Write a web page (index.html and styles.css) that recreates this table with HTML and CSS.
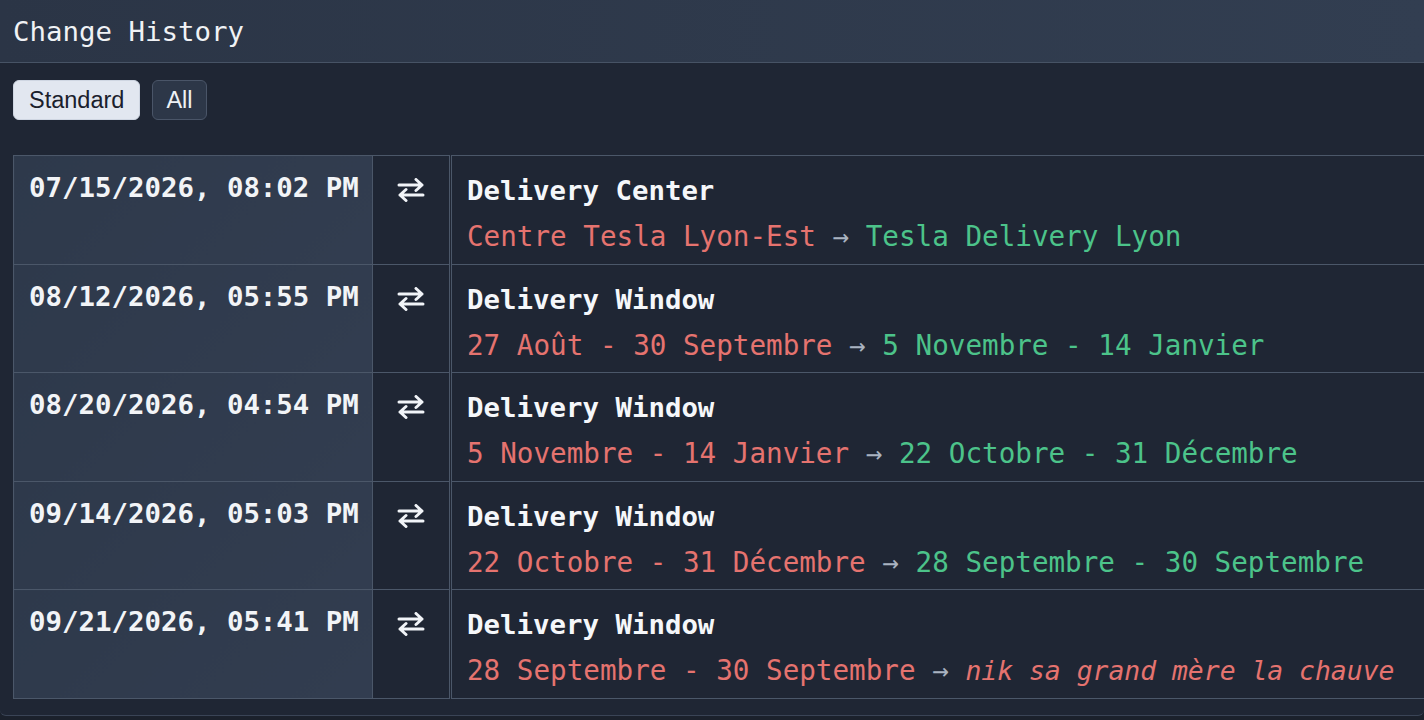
FILE: index.html
```html
<!DOCTYPE html>
<html>
<head>
<meta charset="utf-8">
<link rel="stylesheet" href="styles.css">
</head>
<body>
<div class="panel">
  <div class="header">Change History</div>
  <div class="body">
    <div class="tabs">
      <button class="tab active">Standard</button>
      <button class="tab">All</button>
    </div>
    <table class="history">
      <tr>
        <td class="date">07/15/2026, 08:02 PM</td>
        <td class="icon"><svg viewBox="0 0 28 24" width="28" height="24"><path d="M2 7H25M19 1.5L25 7L19 12.5M26 17H3M9 11.5L3 17L9 22.5" fill="none" stroke="#f1f4f8" stroke-width="3" stroke-linecap="round" stroke-linejoin="round"/></svg></td>
        <td class="change"><div class="field">Delivery Center</div><div class="diff"><span class="old">Centre Tesla Lyon-Est</span> <span class="arrow">→</span> <span class="new">Tesla Delivery Lyon</span></div></td>
      </tr>
      <tr>
        <td class="date">08/12/2026, 05:55 PM</td>
        <td class="icon"><svg viewBox="0 0 28 24" width="28" height="24"><path d="M2 7H25M19 1.5L25 7L19 12.5M26 17H3M9 11.5L3 17L9 22.5" fill="none" stroke="#f1f4f8" stroke-width="3" stroke-linecap="round" stroke-linejoin="round"/></svg></td>
        <td class="change"><div class="field">Delivery Window</div><div class="diff"><span class="old">27 Août - 30 Septembre</span> <span class="arrow">→</span> <span class="new">5 Novembre - 14 Janvier</span></div></td>
      </tr>
      <tr>
        <td class="date">08/20/2026, 04:54 PM</td>
        <td class="icon"><svg viewBox="0 0 28 24" width="28" height="24"><path d="M2 7H25M19 1.5L25 7L19 12.5M26 17H3M9 11.5L3 17L9 22.5" fill="none" stroke="#f1f4f8" stroke-width="3" stroke-linecap="round" stroke-linejoin="round"/></svg></td>
        <td class="change"><div class="field">Delivery Window</div><div class="diff"><span class="old">5 Novembre - 14 Janvier</span> <span class="arrow">→</span> <span class="new">22 Octobre - 31 Décembre</span></div></td>
      </tr>
      <tr>
        <td class="date">09/14/2026, 05:03 PM</td>
        <td class="icon"><svg viewBox="0 0 28 24" width="28" height="24"><path d="M2 7H25M19 1.5L25 7L19 12.5M26 17H3M9 11.5L3 17L9 22.5" fill="none" stroke="#f1f4f8" stroke-width="3" stroke-linecap="round" stroke-linejoin="round"/></svg></td>
        <td class="change"><div class="field">Delivery Window</div><div class="diff"><span class="old">22 Octobre - 31 Décembre</span> <span class="arrow">→</span> <span class="new">28 Septembre - 30 Septembre</span></div></td>
      </tr>
      <tr>
        <td class="date">09/21/2026, 05:41 PM</td>
        <td class="icon"><svg viewBox="0 0 28 24" width="28" height="24"><path d="M2 7H25M19 1.5L25 7L19 12.5M26 17H3M9 11.5L3 17L9 22.5" fill="none" stroke="#f1f4f8" stroke-width="3" stroke-linecap="round" stroke-linejoin="round"/></svg></td>
        <td class="change"><div class="field">Delivery Window</div><div class="diff"><span class="old">28 Septembre - 30 Septembre</span> <span class="arrow">→</span> <span class="old custom">nik sa grand mère la chauve</span></div></td>
      </tr>
    </table>
  </div>
</div>
</body>
</html>
```
FILE: styles.css
```css
html, body {
  margin: 0;
  padding: 0;
  background: #1b212c;
  height: 100%;
  overflow: hidden;
}
.panel {
  width: 1424px;
  height: 716px;
  box-sizing: border-box;
  background: #1f2634;
  border-bottom: 1px solid #3a4456;
  border-radius: 0 0 6px 6px;
  overflow: hidden;
  font-family: "DejaVu Sans Mono", "Liberation Mono", monospace;
  color: #edf0f4;
}
.header {
  height: 62px;
  background: linear-gradient(90deg, #2b3546, #323e51);
  border-bottom: 1px solid #475365;
  font-size: 27.4px;
  line-height: 64px;
  padding-left: 13px;
  color: #f0f2f5;
}
.body {
  padding: 17px 0 0 13px;
}
.tabs {
  display: flex;
  gap: 12px;
}
.tab {
  height: 40px;
  padding: 0 15px;
  border-radius: 6px;
  font-family: "Liberation Sans", Arial, sans-serif;
  font-size: 23.5px;
  border: 1px solid #4a5568;
  background: #2d3748;
  color: #eef1f5;
  cursor: pointer;
}
.tab + .tab {
  padding: 0 13px;
}
.tab.active {
  background: #e2e7f0;
  color: #1a202c;
  border-color: #cfd6e2;
}
.history {
  margin-top: 35px;
  border-collapse: collapse;
  width: 1430px;
  table-layout: fixed;
}
.history td {
  border: 1px solid #4b5769;
  vertical-align: top;
  padding: 0;
}
.date {
  width: 328px;
  background: linear-gradient(135deg, #2e394b, #323d50);
  font-weight: bold;
  font-size: 27.4px;
  line-height: 40px;
  padding: 12px 15px 0 15px !important;
  height: 95.6px;
  white-space: nowrap;
  color: #f2f4f7;
}
.icon {
  width: 78px;
  box-sizing: border-box;
  text-align: center;
  padding-top: 22px !important;
  background: #1f2634;
}
.icon svg {
  display: inline-block;
}
.change {
  border-left: 3px double #4b5769 !important;
  padding: 12px 16px 0 15px !important;
  background: #1f2634;
  white-space: nowrap;
}
.field {
  font-weight: bold;
  font-size: 27.4px;
  line-height: 46px;
  color: #f5f7fa;
}
.diff {
  font-size: 27.6px;
  line-height: 45px;
}
.old { color: #e5736f; }
.new { color: #4cc38a; }
.arrow { color: #a9b3c1; }
.custom { font-style: italic; font-size: 26.4px; }
```
